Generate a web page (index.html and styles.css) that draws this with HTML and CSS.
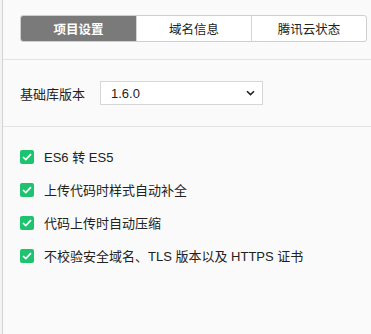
FILE: index.html
```html
<!DOCTYPE html>
<html lang="zh-CN">
<head>
    <meta charset="UTF-8">
    <title>项目设置</title>
    <link rel="stylesheet" href="styles.css">
</head>
<body>
    <div class="panel">
        <div class="tabs-wrap">
            <div class="tabs">
                <a class="tab current">项目设置</a>
                <a class="tab">域名信息</a>
                <a class="tab">腾讯云状态</a>
            </div>
        </div>

        <div class="lib-row">
            <span class="lib-label">基础库版本</span>
            <div class="select">
                <span>1.6.0</span>
                <svg class="chevron" width="9" height="6" viewBox="0 0 9 6">
                    <path d="M1 1.2 L4.5 4.6 L8 1.2" fill="none" stroke="#222" stroke-width="1.6"/>
                </svg>
            </div>
        </div>

        <div class="options">
            <label class="option"><span class="check"><svg width="10" height="8" viewBox="0 0 10 8"><path d="M1 4 L3.8 6.6 L9 1.2" fill="none" stroke="#fff" stroke-width="1.7"/></svg></span>ES6 转 ES5</label>
            <label class="option"><span class="check"><svg width="10" height="8" viewBox="0 0 10 8"><path d="M1 4 L3.8 6.6 L9 1.2" fill="none" stroke="#fff" stroke-width="1.7"/></svg></span>上传代码时样式自动补全</label>
            <label class="option"><span class="check"><svg width="10" height="8" viewBox="0 0 10 8"><path d="M1 4 L3.8 6.6 L9 1.2" fill="none" stroke="#fff" stroke-width="1.7"/></svg></span>代码上传时自动压缩</label>
            <label class="option"><span class="check"><svg width="10" height="8" viewBox="0 0 10 8"><path d="M1 4 L3.8 6.6 L9 1.2" fill="none" stroke="#fff" stroke-width="1.7"/></svg></span>不校验安全域名、TLS 版本以及 HTTPS 证书</label>
        </div>
    </div>
</body>
</html>
```

FILE: styles.css
```css
body {
    margin: 0;
    background-color: #f3f3f3;
    font-family: "Liberation Sans", "Noto Sans CJK SC", sans-serif;
    font-size: 13px;
    color: #222;
}
.panel {
    margin-left: 2px;
    border-left: 1px solid #d4d4d4;
    background-color: #fafafa;
    height: 334px;
    box-sizing: border-box;
}
.tabs-wrap {
    padding: 15px 4px 0 17px;
    height: 60px;
    box-sizing: border-box;
    border-bottom: 1px solid #e3e3e3;
}
.tabs {
    display: grid;
    grid-template-columns: repeat(3, 1fr);
    height: 25px;
    border: 1px solid #cfcfcf;
    border-radius: 3px;
    overflow: hidden;
    background: #fff;
}
.tab {
    display: flex;
    align-items: center;
    justify-content: center;
    color: #222;
    font-size: 12.5px;
    border-left: 1px solid #d4d4d4;
}
.tab:first-child {
    border-left: none;
}
.tab.current {
    background-color: #7a7a7a;
    color: #fff;
    font-weight: bold;
}
.lib-row {
    display: flex;
    align-items: center;
    height: 66px;
    padding-left: 17px;
    border-bottom: 1px solid #e3e3e3;
}
.lib-label {
    width: 80px;
}
.select {
    display: flex;
    align-items: center;
    justify-content: space-between;
    width: 163px;
    height: 24px;
    box-sizing: border-box;
    padding: 0 7px 0 10px;
    background: #fff;
    border: 1px solid #d6d6d6;
    font-size: 13px;
}
.options {
    padding: 13px 0 0 17px;
}
.option {
    display: flex;
    align-items: center;
    height: 33px;
}
.check {
    display: flex;
    align-items: center;
    justify-content: center;
    width: 14px;
    height: 14px;
    border-radius: 2px;
    background-color: #1ec36f;
    margin-right: 10px;
}
```
